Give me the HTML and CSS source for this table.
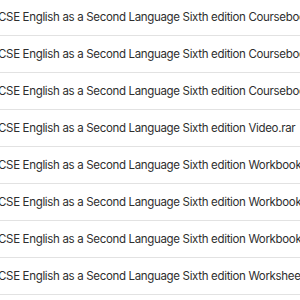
FILE: index.html
```html
<!DOCTYPE html>
<html>
<head>
<meta charset="utf-8">
<link rel="stylesheet" href="styles.css">
</head>
<body>
<ul class="files">
  <li class="file">IGCSE English as a Second Language Sixth edition Coursebook.pdf</li>
  <li class="file">IGCSE English as a Second Language Sixth edition Coursebook Answers.pdf</li>
  <li class="file">IGCSE English as a Second Language Sixth edition Coursebook Audio.rar</li>
  <li class="file">IGCSE English as a Second Language Sixth edition Video.rar</li>
  <li class="file">IGCSE English as a Second Language Sixth edition Workbook.pdf</li>
  <li class="file">IGCSE English as a Second Language Sixth edition Workbook Answers.pdf</li>
  <li class="file">IGCSE English as a Second Language Sixth edition Workbook Audio.rar</li>
  <li class="file">IGCSE English as a Second Language Sixth edition Worksheets.pdf</li>
</ul>
</body>
</html>
```
FILE: styles.css
```css
html, body {
  margin: 0;
  padding: 0;
  background: #ffffff;
  overflow: hidden;
}
.files {
  list-style: none;
  margin: -1px 0 0 -13px;
  padding: 0;
  width: 600px;
}
.file {
  height: 36px;
  line-height: 37px;
  border-bottom: 1px solid #e2e2e2;
  font-family: Inter, "Noto Sans", sans-serif;
  font-size: 11.5px;
  letter-spacing: -0.33px;
  color: #2e2e2e;
  white-space: nowrap;
}
```
